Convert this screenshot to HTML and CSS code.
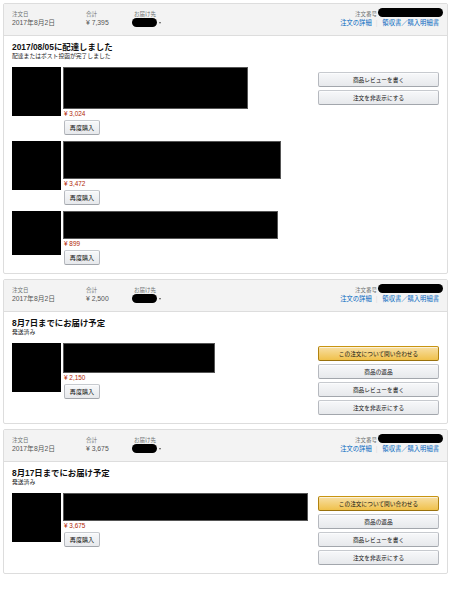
FILE: index.html
```html
<!DOCTYPE html>
<html lang="ja">
<head>
<meta charset="utf-8">
<title>注文履歴</title>
<link rel="stylesheet" href="styles.css">
</head>
<body>
<div class="page">

  <div class="order">
    <div class="order-head">
      <div class="meta">
        <div class="col col-date"><div class="lbl">注文日</div><div class="val">2017年8月2日</div></div>
        <div class="col col-total"><div class="lbl">合計</div><div class="val">¥ 7,395</div></div>
        <div class="col col-ship"><div class="lbl">お届け先</div><div class="val"><span class="oval"></span><span class="caret"></span></div></div>
      </div>
      <div class="meta-right">
        <div class="ordno"><span class="lbl">注文番号</span><span class="pill"></span></div>
        <div class="links"><a class="lnk">注文の詳細</a><span class="sep">|</span><a class="lnk">領収書／購入明細書</a></div>
      </div>
    </div>
    <div class="order-body">
      <div class="status">
        <div class="status-title">2017/08/05に配達しました</div>
        <div class="status-sub">配達またはポスト投函が完了しました</div>
      </div>
      <div class="content">
        <div class="items">
          <div class="item">
            <div class="thumb"></div>
            <div class="detail">
              <div class="name-box" style="width:185px;height:42px"></div>
              <div class="price">¥ 3,024</div>
              <button class="btn btn-small">再度購入</button>
            </div>
          </div>
          <div class="item">
            <div class="thumb"></div>
            <div class="detail">
              <div class="name-box" style="width:218px;height:38px"></div>
              <div class="price">¥ 3,472</div>
              <button class="btn btn-small">再度購入</button>
            </div>
          </div>
          <div class="item">
            <div class="thumb thumb-short"></div>
            <div class="detail">
              <div class="name-box" style="width:215px;height:28px"></div>
              <div class="price">¥ 899</div>
              <button class="btn btn-small">再度購入</button>
            </div>
          </div>
        </div>
        <div class="actions actions-low">
          <button class="btn btn-wide">商品レビューを書く</button>
          <button class="btn btn-wide">注文を非表示にする</button>
        </div>
      </div>
    </div>
  </div>

  <div class="order">
    <div class="order-head">
      <div class="meta">
        <div class="col col-date"><div class="lbl">注文日</div><div class="val">2017年8月2日</div></div>
        <div class="col col-total"><div class="lbl">合計</div><div class="val">¥ 2,500</div></div>
        <div class="col col-ship"><div class="lbl">お届け先</div><div class="val"><span class="oval"></span><span class="caret"></span></div></div>
      </div>
      <div class="meta-right">
        <div class="ordno"><span class="lbl">注文番号</span><span class="pill"></span></div>
        <div class="links"><a class="lnk">注文の詳細</a><span class="sep">|</span><a class="lnk">領収書／購入明細書</a></div>
      </div>
    </div>
    <div class="order-body">
      <div class="status">
        <div class="status-title">8月7日までにお届け予定</div>
        <div class="status-sub">発送済み</div>
      </div>
      <div class="content">
        <div class="items">
          <div class="item">
            <div class="thumb"></div>
            <div class="detail">
              <div class="name-box" style="width:152px;height:30px"></div>
              <div class="price">¥ 2,150</div>
              <button class="btn btn-small">再度購入</button>
            </div>
          </div>
        </div>
        <div class="actions">
          <button class="btn btn-wide btn-primary">この注文について問い合わせる</button>
          <button class="btn btn-wide">商品の返品</button>
          <button class="btn btn-wide">商品レビューを書く</button>
          <button class="btn btn-wide">注文を非表示にする</button>
        </div>
      </div>
    </div>
  </div>

  <div class="order">
    <div class="order-head">
      <div class="meta">
        <div class="col col-date"><div class="lbl">注文日</div><div class="val">2017年8月2日</div></div>
        <div class="col col-total"><div class="lbl">合計</div><div class="val">¥ 3,675</div></div>
        <div class="col col-ship"><div class="lbl">お届け先</div><div class="val"><span class="oval"></span><span class="caret"></span></div></div>
      </div>
      <div class="meta-right">
        <div class="ordno"><span class="lbl">注文番号</span><span class="pill"></span></div>
        <div class="links"><a class="lnk">注文の詳細</a><span class="sep">|</span><a class="lnk">領収書／購入明細書</a></div>
      </div>
    </div>
    <div class="order-body">
      <div class="status">
        <div class="status-title">8月17日までにお届け予定</div>
        <div class="status-sub">発送済み</div>
      </div>
      <div class="content">
        <div class="items">
          <div class="item">
            <div class="thumb"></div>
            <div class="detail">
              <div class="name-box" style="width:245px;height:28px"></div>
              <div class="price">¥ 3,675</div>
              <button class="btn btn-small">再度購入</button>
            </div>
          </div>
        </div>
        <div class="actions">
          <button class="btn btn-wide btn-primary">この注文について問い合わせる</button>
          <button class="btn btn-wide">商品の返品</button>
          <button class="btn btn-wide">商品レビューを書く</button>
          <button class="btn btn-wide">注文を非表示にする</button>
        </div>
      </div>
    </div>
  </div>

</div>
</body>
</html>
```

FILE: styles.css
```css
* { box-sizing: border-box; }

html, body {
  margin: 0;
  padding: 0;
  background: #ffffff;
}

body {
  font-family: "Liberation Sans", "Noto Sans CJK JP", sans-serif;
  color: #111111;
}

.page {
  width: 448px;
  padding: 3px 0 0 3px;
  display: flex;
  flex-direction: column;
  gap: 5px;
}

.order {
  width: 445px;
  border: 1px solid #dddddd;
  border-radius: 2px;
  background: #ffffff;
}

.order-head {
  display: flex;
  justify-content: space-between;
  background: #f3f3f3;
  border-bottom: 1px solid #dddddd;
  padding: 6px 8px 8px 8px;
}

.meta {
  display: flex;
}

.col-date { width: 74px; }
.col-total { width: 48px; }

.lbl {
  font-size: 5.5px;
  line-height: 8px;
  color: #6f7373;
}

.val {
  font-size: 6.8px;
  line-height: 9px;
  height: 9px;
  color: #555555;
  display: flex;
  align-items: center;
}

.oval {
  display: inline-block;
  width: 25px;
  height: 9px;
  border-radius: 5px;
  background: #000000;
  margin-left: -2px;
}

.caret {
  display: inline-block;
  width: 0;
  height: 0;
  margin-left: 2px;
  border-left: 1.5px solid transparent;
  border-right: 1.5px solid transparent;
  border-top: 2px solid #555555;
}

.meta-right {
  display: flex;
  flex-direction: column;
  align-items: flex-end;
}

.ordno {
  display: flex;
  align-items: flex-start;
  height: 8px;
}

.ordno .lbl {
  margin-right: 1px;
}

.pill {
  display: inline-block;
  width: 65px;
  height: 9px;
  border-radius: 5px;
  background: #000000;
  margin-top: -2px;
  margin-right: -4px;
}

.links {
  font-size: 6.3px;
  line-height: 9px;
  display: flex;
}

.lnk {
  color: #0066c0;
  text-decoration: none;
}

.sep {
  color: #dddddd;
  margin: 0 5px 0 4px;
}

.order-body {
  padding: 6px 8px 8px 8px;
}

.status-title {
  font-size: 8.4px;
  line-height: 11px;
  font-weight: bold;
  color: #111111;
}

.status-sub {
  font-size: 5.8px;
  line-height: 7px;
  color: #222222;
}

.content {
  display: flex;
  justify-content: space-between;
  margin-top: 7px;
}

.items {
  display: flex;
  flex-direction: column;
  gap: 6px;
}

.item {
  display: flex;
  gap: 2px;
}

.thumb {
  width: 49px;
  height: 49px;
  background: #000000;
}

.thumb-short {
  height: 44px;
}

.detail {
  display: flex;
  flex-direction: column;
  align-items: flex-start;
}

.name-box {
  background: #000000;
  border: 1px solid #555555;
}

.price {
  font-size: 6.4px;
  line-height: 9px;
  color: #b12704;
  margin-left: 1px;
}

.btn {
  font-family: "Liberation Sans", "Noto Sans CJK JP", sans-serif;
  color: #111111;
  height: 15px;
  padding: 0;
  border: 1px solid #adb1b8;
  border-color: #c7cacf #b6b9bf #a2a6ac;
  border-radius: 2px;
  background: linear-gradient(to bottom, #f7f8fa, #e7e9ec);
  box-shadow: 0 1px 0 rgba(255, 255, 255, 0.6) inset;
  display: flex;
  align-items: center;
  justify-content: center;
  cursor: pointer;
}

.btn-small {
  width: 36px;
  margin-top: 2px;
  margin-left: 1px;
  font-size: 6.1px;
}

.actions {
  width: 121px;
  display: flex;
  flex-direction: column;
  gap: 3px;
  margin-top: 3px;
}

.actions-low {
  margin-top: 5px;
}

.btn-wide {
  width: 121px;
  font-size: 5.7px;
}

.btn-primary {
  background: linear-gradient(to bottom, #f7dfa5, #f0c14b);
  border-color: #c89411 #b0820f #99710d;
}
```
